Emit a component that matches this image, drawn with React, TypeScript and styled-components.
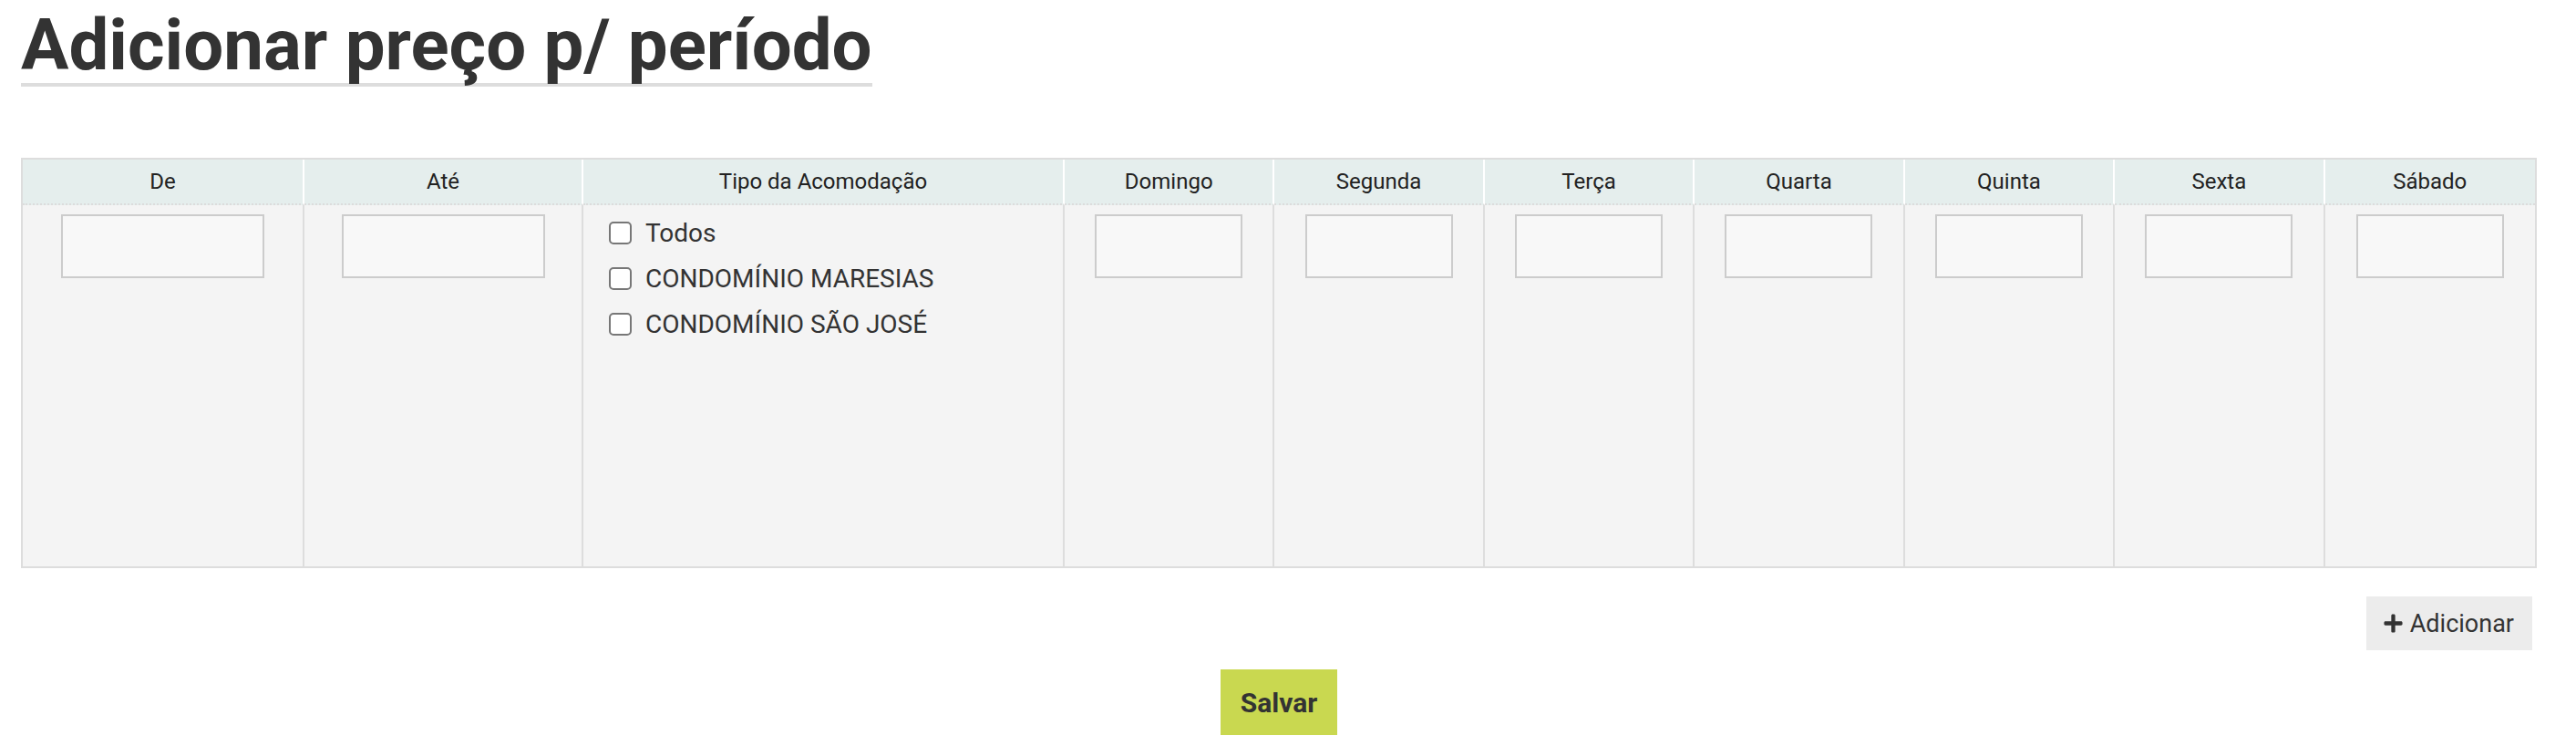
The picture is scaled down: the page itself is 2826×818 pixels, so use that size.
import React from 'react';
import styled, { createGlobalStyle } from 'styled-components';
import { FaPlus } from 'react-icons/fa';

const GlobalStyle = createGlobalStyle`
  html, body {
    margin: 0;
    padding: 0;
    background: #fff;
    font-family: Roboto, 'Liberation Sans', Arial, sans-serif;
    color: #333;
  }
`;

const Page = styled.div`
  width: 2760px;
  padding: 0 43px 0 23px;
`;

const Title = styled.h1`
  display: inline-block;
  margin: 0;
  padding: 10px 0 2px;
  font-size: 78px;
  line-height: 79px;
  font-weight: 700;
  color: #333;
  border-bottom: 4px solid #ddd;
`;

const Grid = styled.div`
  margin-top: 78px;
  display: grid;
  grid-template-columns: 309px 306px 528px repeat(7, 1fr);
  grid-template-rows: 50px 396px;
  border: 2px solid #ddd;
  background: #f4f4f4;
`;

const HeadCell = styled.div<{ $last?: boolean }>`
  display: flex;
  align-items: center;
  justify-content: center;
  background: #e5eeed;
  border-right: ${(p) => (p.$last ? '0' : '2px solid #fff')};
  border-bottom: 2px dotted #dcdcdc;
  font-size: 24px;
  color: #222;
`;

const BodyCell = styled.div<{ $last?: boolean }>`
  display: flex;
  flex-direction: column;
  align-items: center;
  padding-top: 10px;
  border-right: ${(p) => (p.$last ? '0' : '2px solid #ddd')};
`;

const ListCell = styled.div`
  display: flex;
  flex-direction: column;
  padding: 5px 0 0 28px;
  border-right: 2px solid #ddd;
`;

const Field = styled.input<{ $w: number }>`
  box-sizing: border-box;
  width: ${(p) => p.$w}px;
  height: 70px;
  margin: 0;
  background: #f8f8f8;
  border: 2px solid #ccc;
  outline: none;
`;

const Option = styled.label`
  display: flex;
  align-items: center;
  gap: 15px;
  height: 50px;
  font-size: 28px;
  color: #333;
`;

const Check = styled.input`
  appearance: none;
  box-sizing: border-box;
  width: 25px;
  height: 25px;
  margin: 0;
  background: #fff;
  border: 2px solid #777;
  border-radius: 5px;
`;

const Actions = styled.div`
  display: flex;
  justify-content: flex-end;
  margin-top: 31px;
  padding-right: 5px;
`;

const AddButton = styled.button`
  display: flex;
  align-items: center;
  gap: 7px;
  height: 59px;
  padding: 0 20px 0 18px;
  border: 0;
  background: #ececec;
  font-family: Roboto, 'Liberation Sans', Arial, sans-serif;
  font-size: 27px;
  color: #333;
  svg {
    width: 23px;
    height: 23px;
  }
`;

const Footer = styled.div`
  display: flex;
  justify-content: center;
  margin-top: 21px;
`;

const SaveButton = styled.button`
  width: 128px;
  height: 72px;
  border: 0;
  background: #c9d850;
  font-family: Roboto, 'Liberation Sans', Arial, sans-serif;
  font-size: 30px;
  font-weight: 700;
  color: #333;
`;

const days = ['Domingo', 'Segunda', 'Terça', 'Quarta', 'Quinta', 'Sexta', 'Sábado'];
const units = ['Todos', 'CONDOMÍNIO MARESIAS', 'CONDOMÍNIO SÃO JOSÉ'];

export default function App() {
  return (
    <Page>
      <GlobalStyle />
      <Title>Adicionar preço p/ período</Title>

      <Grid>
        <HeadCell>De</HeadCell>
        <HeadCell>Até</HeadCell>
        <HeadCell>Tipo da Acomodação</HeadCell>
        {days.map((d, i) => (
          <HeadCell key={d} $last={i === days.length - 1}>
            {d}
          </HeadCell>
        ))}

        <BodyCell>
          <Field $w={223} />
        </BodyCell>
        <BodyCell>
          <Field $w={223} />
        </BodyCell>
        <ListCell>
          {units.map((u) => (
            <Option key={u}>
              <Check type="checkbox" />
              {u}
            </Option>
          ))}
        </ListCell>
        {days.map((d, i) => (
          <BodyCell key={d} $last={i === days.length - 1}>
            <Field $w={162} />
          </BodyCell>
        ))}
      </Grid>

      <Actions>
        <AddButton>
          <FaPlus />
          Adicionar
        </AddButton>
      </Actions>

      <Footer>
        <SaveButton>Salvar</SaveButton>
      </Footer>
    </Page>
  );
}
